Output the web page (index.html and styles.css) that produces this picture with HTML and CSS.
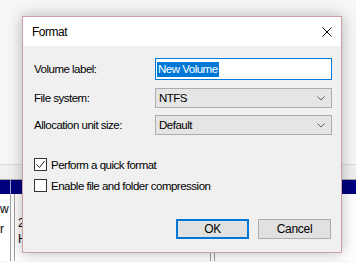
FILE: index.html
```html
<!DOCTYPE html>
<html lang="en">
<head>
  <meta charset="UTF-8" />
  <title>Format</title>
  <link rel="stylesheet" href="styles.css">
</head>
<body>

  <!-- window behind the dialog -->
  <div class="desk">
    <div class="desk-top"></div>
    <div class="desk-bar"></div>
    <div class="desk-head">
      <span class="head-cell first"></span>
      <span class="head-cell"></span>
    </div>
    <div class="desk-list">
      <div class="list-col first"><span>w</span><span>r</span></div>
      <div class="list-col second"><span>2</span><span>H</span></div>
      <div class="list-col third"></div>
    </div>
  </div>

  <div class="dialog">
    <div class="title-bar">
      <span class="title">Format</span>
      <svg class="close" width="10" height="10" viewBox="0 0 10 10">
        <path d="M0.5 0.5 L9.5 9.5 M9.5 0.5 L0.5 9.5" stroke="#000" stroke-width="1" fill="none"/>
      </svg>
    </div>

    <div class="dialog-body">
      <div class="field">
        <label class="field-label">Volume label:</label>
        <div class="text-box"><span class="selected">New Volume</span></div>
      </div>
      <div class="field">
        <label class="field-label">File system:</label>
        <div class="combo">
          <span>NTFS</span>
          <svg class="chevron" width="8" height="5" viewBox="0 0 8 5">
            <path d="M0.5 0.5 L4 4 L7.5 0.5" stroke="#606060" stroke-width="1" fill="none"/>
          </svg>
        </div>
      </div>
      <div class="field">
        <label class="field-label">Allocation unit size:</label>
        <div class="combo">
          <span>Default</span>
          <svg class="chevron" width="8" height="5" viewBox="0 0 8 5">
            <path d="M0.5 0.5 L4 4 L7.5 0.5" stroke="#606060" stroke-width="1" fill="none"/>
          </svg>
        </div>
      </div>

      <div class="check first">
        <span class="box">
          <svg width="11" height="11" viewBox="0 0 11 11">
            <path d="M1.5 5.5 L4.5 8.5 L9.5 2" stroke="#222" stroke-width="1" fill="none"/>
          </svg>
        </span>
        <span>Perform a quick format</span>
      </div>
      <div class="check">
        <span class="box"></span>
        <span>Enable file and folder compression</span>
      </div>

      <div class="buttons">
        <button class="btn default">OK</button>
        <button class="btn">Cancel</button>
      </div>
    </div>
  </div>

</body>
</html>
```

FILE: styles.css
```css
body {
  margin: 0;
  font-family: "Liberation Sans", Arial, sans-serif;
  font-size: 11.5px;
  letter-spacing: -0.5px;
  color: #000;
  background: #f5f5f5;
  overflow: hidden;
}

/* background window */
.desk {
  height: 262px;
}

.desk-top {
  height: 164px;
  background: #f7f7f7;
}

.desk-bar {
  height: 16px;
  background: #f0f0f0;
  border-top: 1px solid #dcdcdc;
  border-bottom: 1px solid #a8a8a8;
  box-sizing: border-box;
}

.desk-head {
  display: flex;
  height: 14px;
  background: #00007f;
}

.head-cell.first {
  width: 10px;
  border-right: 1px solid #a0a0c8;
}

.desk-list {
  display: flex;
  height: 67px;
  background: #fff;
  font-size: 12px;
}

.list-col {
  display: flex;
  flex-direction: column;
  box-sizing: border-box;
}

.list-col.first {
  width: 11px;
  padding-top: 8px;
  gap: 6px;
  border-right: 1px solid #a0a0a0;
}

.list-col.second {
  width: 197px;
  margin-left: 3px;
  padding: 22px 0 0 3px;
  gap: 2px;
  border-left: 1px solid #a0a0a0;
  border-right: 1px solid #a0a0a0;
}

.list-col.third {
  width: 4px;
  border-right: 1px solid #a0a0a0;
}

/* dialog */
.dialog {
  position: absolute;
  left: 22px;
  top: 16px;
  width: 320px;
  height: 237px;
  box-sizing: border-box;
  border: 1px solid #cf9ea3;
  background: #f0f0f0;
  box-shadow: 0 0 14px rgba(0, 0, 0, 0.28);
}

.title-bar {
  height: 29px;
  background: #fff;
  display: flex;
  align-items: center;
  justify-content: space-between;
  padding: 0 9px 0 9px;
}

.title {
  font-size: 12px;
}

.close {
  display: block;
}

.dialog-body {
  padding: 12px 9px 0 11px;
}

.field {
  display: flex;
  align-items: center;
  margin-bottom: 7px;
}

.field:first-child {
  margin-bottom: 8px;
}

.field-label {
  width: 121px;
}

.text-box {
  flex: 1;
  height: 22px;
  box-sizing: border-box;
  border: 1px solid #0078d7;
  background: #fff;
  padding: 2px 1px;
  display: flex;
  align-items: center;
}

.selected {
  background: #0078d7;
  color: #fff;
  line-height: 15px;
  padding: 0 1px;
}

.combo {
  flex: 1;
  height: 20px;
  box-sizing: border-box;
  border: 1px solid #adadad;
  background: #e5e5e5;
  display: flex;
  align-items: center;
  justify-content: space-between;
  padding: 0 6px 0 3px;
}

.chevron {
  display: block;
}

.check {
  display: flex;
  align-items: center;
  gap: 4px;
  height: 13px;
  margin-top: 8px;
}

.check.first {
  margin-top: 23px;
}

.box {
  width: 13px;
  height: 13px;
  box-sizing: border-box;
  border: 1px solid #333;
  background: #fff;
  display: flex;
  align-items: center;
  justify-content: center;
}

.box svg {
  display: block;
}

.buttons {
  display: flex;
  justify-content: flex-end;
  gap: 9px;
  margin-top: 27px;
  padding-right: 1px;
}

.btn {
  width: 73px;
  height: 20px;
  box-sizing: border-box;
  border: 1px solid #adadad;
  background: #e1e1e1;
  font-family: inherit;
  font-size: 12px;
  letter-spacing: -0.3px;
  color: #000;
  padding: 0;
}

.btn.default {
  border: 2px solid #0078d7;
}
```
